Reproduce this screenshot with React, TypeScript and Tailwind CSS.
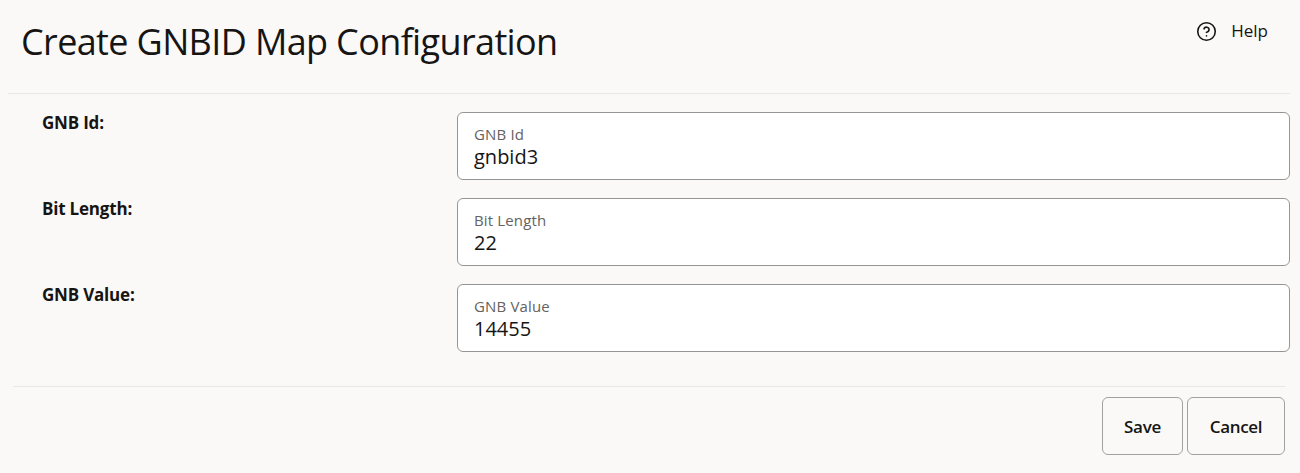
import { CircleHelp } from "lucide-react";

const rows = [
  { label: "GNB Id:", hint: "GNB Id", value: "gnbid3" },
  { label: "Bit Length:", hint: "Bit Length", value: "22" },
  { label: "GNB Value:", hint: "GNB Value", value: "14455" },
];

export default function App() {
  return (
    <div className="h-[473px] w-[1300px] overflow-hidden bg-[#fbf9f8] font-['Open_Sans','Noto_Sans',sans-serif] text-[#161513]">
      <header className="ml-2 mr-[10px] flex h-[94px] justify-between border-b border-[#e9e7e5] pl-[13px] pr-[22px]">
        <h1 className="mt-[18px] text-[36px] leading-[48px] tracking-[-0.63px]">Create GNBID Map Configuration</h1>
        <button className="mt-[19px] flex h-6 items-center gap-[14px] text-[17px]">
          <CircleHelp className="h-[21px] w-[21px]" strokeWidth={1.8} />
          <span>Help</span>
        </button>
      </header>
      <main className="ml-2 mr-[10px] mt-[18px] flex flex-col gap-[18px]">
        {rows.map((r) => (
          <div key={r.label} className="flex">
            <label className="w-[449px] pl-[34px] pt-[1px] text-[17px] font-bold leading-[20px] tracking-[-0.2px]">{r.label}</label>
            <div className="flex h-[68px] flex-1 flex-col rounded-[6px] border border-[#979592] bg-white pl-4 pt-[12px]">
              <span className="text-[15px] leading-[19px] tracking-[0.15px] text-[#65625f]">{r.hint}</span>
              <span className="text-[20px] leading-[25px]">{r.value}</span>
            </div>
          </div>
        ))}
      </main>
      <footer className="ml-[13px] mr-[15px] mt-[34px] flex justify-end gap-[4px] border-t border-[#e9e7e5] pt-[10px]">
        <button className="h-[58px] w-[81px] rounded-[6px] border border-[#a3a19e] pt-[2px] text-[17px] font-semibold tracking-[-0.3px]">Save</button>
        <button className="h-[58px] w-[98px] rounded-[6px] border border-[#a3a19e] pt-[2px] text-[17px] font-semibold tracking-[-0.3px]">Cancel</button>
      </footer>
    </div>
  );
}
